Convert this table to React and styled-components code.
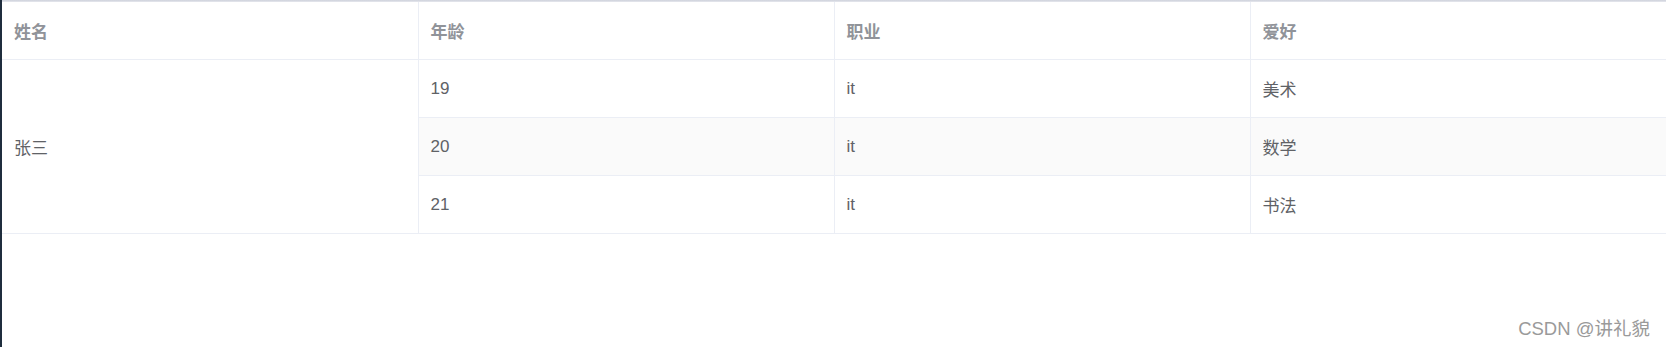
import React from 'react';
import styled, { createGlobalStyle } from 'styled-components';

const GlobalStyle = createGlobalStyle`
  html, body {
    margin: 0;
    padding: 0;
    background: #fff;
    font-family: "Liberation Sans", "Noto Sans CJK SC", sans-serif;
  }
`;

const Page = styled.div`
  position: relative;
  min-height: 347px;
  border-left: 2px solid #1f2d3d;
  box-sizing: border-box;
`;

const TopShade = styled.div`
  height: 2px;
  background: linear-gradient(#cdd1db, #e6e8ee);
`;

const Table = styled.table`
  width: 100%;
  table-layout: fixed;
  border-collapse: collapse;
  font-size: 17px;
`;

const HeadCell = styled.th`
  height: 57px;
  padding: 0 12px;
  text-align: left;
  font-weight: bold;
  color: #909399;
  border-bottom: 1px solid #ebeef5;
  border-right: 1px solid #ebeef5;
  &:last-child {
    border-right: none;
  }
`;

const Row = styled.tr`
  background: ${p => (p.$striped ? '#fafafa' : '#fff')};
`;

const Cell = styled.td`
  height: 57px;
  padding: 0 12px;
  color: #606266;
  background: ${p => (p.$plain ? '#fff' : 'inherit')};
  border-bottom: 1px solid #ebeef5;
  border-right: 1px solid #ebeef5;
  &:last-child {
    border-right: none;
  }
`;

const Watermark = styled.div`
  position: absolute;
  right: 16px;
  bottom: 7px;
  font-size: 18.5px;
  color: #9a9a9a;
  text-shadow: 0 0 1px #fff;
`;

const rows = [
  { age: 19, job: 'it', hobby: '美术' },
  { age: 20, job: 'it', hobby: '数学' },
  { age: 21, job: 'it', hobby: '书法' },
];

export default function App() {
  return (
    <>
      <GlobalStyle />
      <Page>
        <TopShade />
        <Table>
          <thead>
            <tr>
              <HeadCell>姓名</HeadCell>
              <HeadCell>年龄</HeadCell>
              <HeadCell>职业</HeadCell>
              <HeadCell>爱好</HeadCell>
            </tr>
          </thead>
          <tbody>
            {rows.map((r, i) => (
              <Row key={r.age} $striped={i % 2 === 1}>
                {i === 0 && (
                  <Cell rowSpan={rows.length} $plain>
                    张三
                  </Cell>
                )}
                <Cell>{r.age}</Cell>
                <Cell>{r.job}</Cell>
                <Cell>{r.hobby}</Cell>
              </Row>
            ))}
          </tbody>
        </Table>
        <Watermark>CSDN @讲礼貌</Watermark>
      </Page>
    </>
  );
}
